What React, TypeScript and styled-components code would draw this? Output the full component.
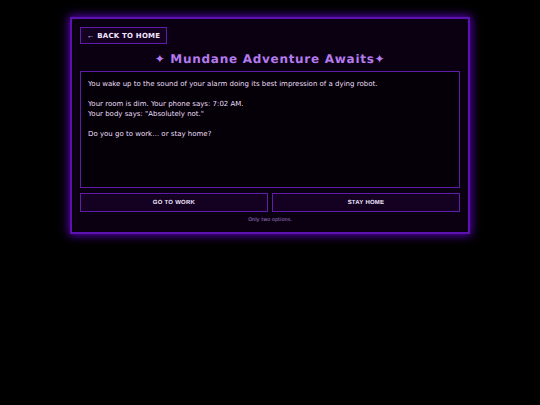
import React from "react";
import styled, { createGlobalStyle } from "styled-components";

const GlobalStyle = createGlobalStyle`
  * { box-sizing: border-box; }
  body {
    margin: 0;
    background: #000;
    color: #eadff5;
    font-family: "DejaVu Sans", Verdana, sans-serif;
    text-rendering: geometricPrecision;
  }
`;

const Page = styled.div`
  padding: 17px 20px;
`;

const Panel = styled.main`
  max-width: 400px;
  margin: 0 auto;
  padding: 8px;
  border: 2px solid #5c12b0;
  background: #0a0012;
  box-shadow: 0 0 9px 1px #5f00c4;
`;

const BackLink = styled.a`
  display: inline-flex;
  gap: 3px;
  padding: 4px 6px 2px;
  border: 1px solid #5f1ca8;
  background: #140020;
  color: #f0e6ff;
  font-size: 7px;
  line-height: 9px;
  font-weight: bold;
  letter-spacing: 0.03em;
  text-decoration: none;
  text-transform: uppercase;
`;

const Arrow = styled.span`
  font-family: "Liberation Sans", Arial, sans-serif;
  font-weight: normal;
`;

const TopBar = styled.nav`
  display: flex;
`;

const Title = styled.h1`
  margin: 7px 0 4px;
  color: #b57bee;
  font-size: 12px;
  line-height: 16px;
  letter-spacing: 0.06em;
  text-align: center;
`;

const Story = styled.p`
  min-height: 117px;
  margin: 0;
  padding: 7px;
  border: 1px solid #5f1ca8;
  background: #050008;
  font-size: 7px;
  line-height: 10px;
  white-space: pre-line;
`;

const Choices = styled.div`
  display: grid;
  grid-template-columns: 1fr 1fr;
  gap: 4px;
  margin-top: 5px;
`;

const Choice = styled.button`
  height: 19px;
  padding: 0;
  border: 1px solid #5f1ca8;
  background: #140020;
  color: #f0e6ff;
  font: bold 6px/8px "Liberation Sans", Arial, sans-serif;
  text-rendering: inherit;
  letter-spacing: 0.04em;
  text-transform: uppercase;
`;

const Hint = styled.p`
  margin: 4px 0 0;
  color: #ab80d6;
  font-size: 5px;
  line-height: 8px;
  text-align: center;
`;

const story = `You wake up to the sound of your alarm doing its best impression of a dying robot.

Your room is dim. Your phone says: 7:02 AM.
Your body says: "Absolutely not."

Do you go to work… or stay home?`;

export default function App() {
  return (
    <>
      <GlobalStyle />
      <Page>
        <Panel>
          <TopBar>
            <BackLink href="#home">
              <Arrow>←</Arrow>
              <span>Back to Home</span>
            </BackLink>
          </TopBar>
          <Title>✦ Mundane Adventure Awaits✦</Title>
          <Story>{story}</Story>
          <Choices>
            <Choice type="button">Go to work</Choice>
            <Choice type="button">Stay home</Choice>
          </Choices>
          <Hint>Only two options.</Hint>
        </Panel>
      </Page>
    </>
  );
}
